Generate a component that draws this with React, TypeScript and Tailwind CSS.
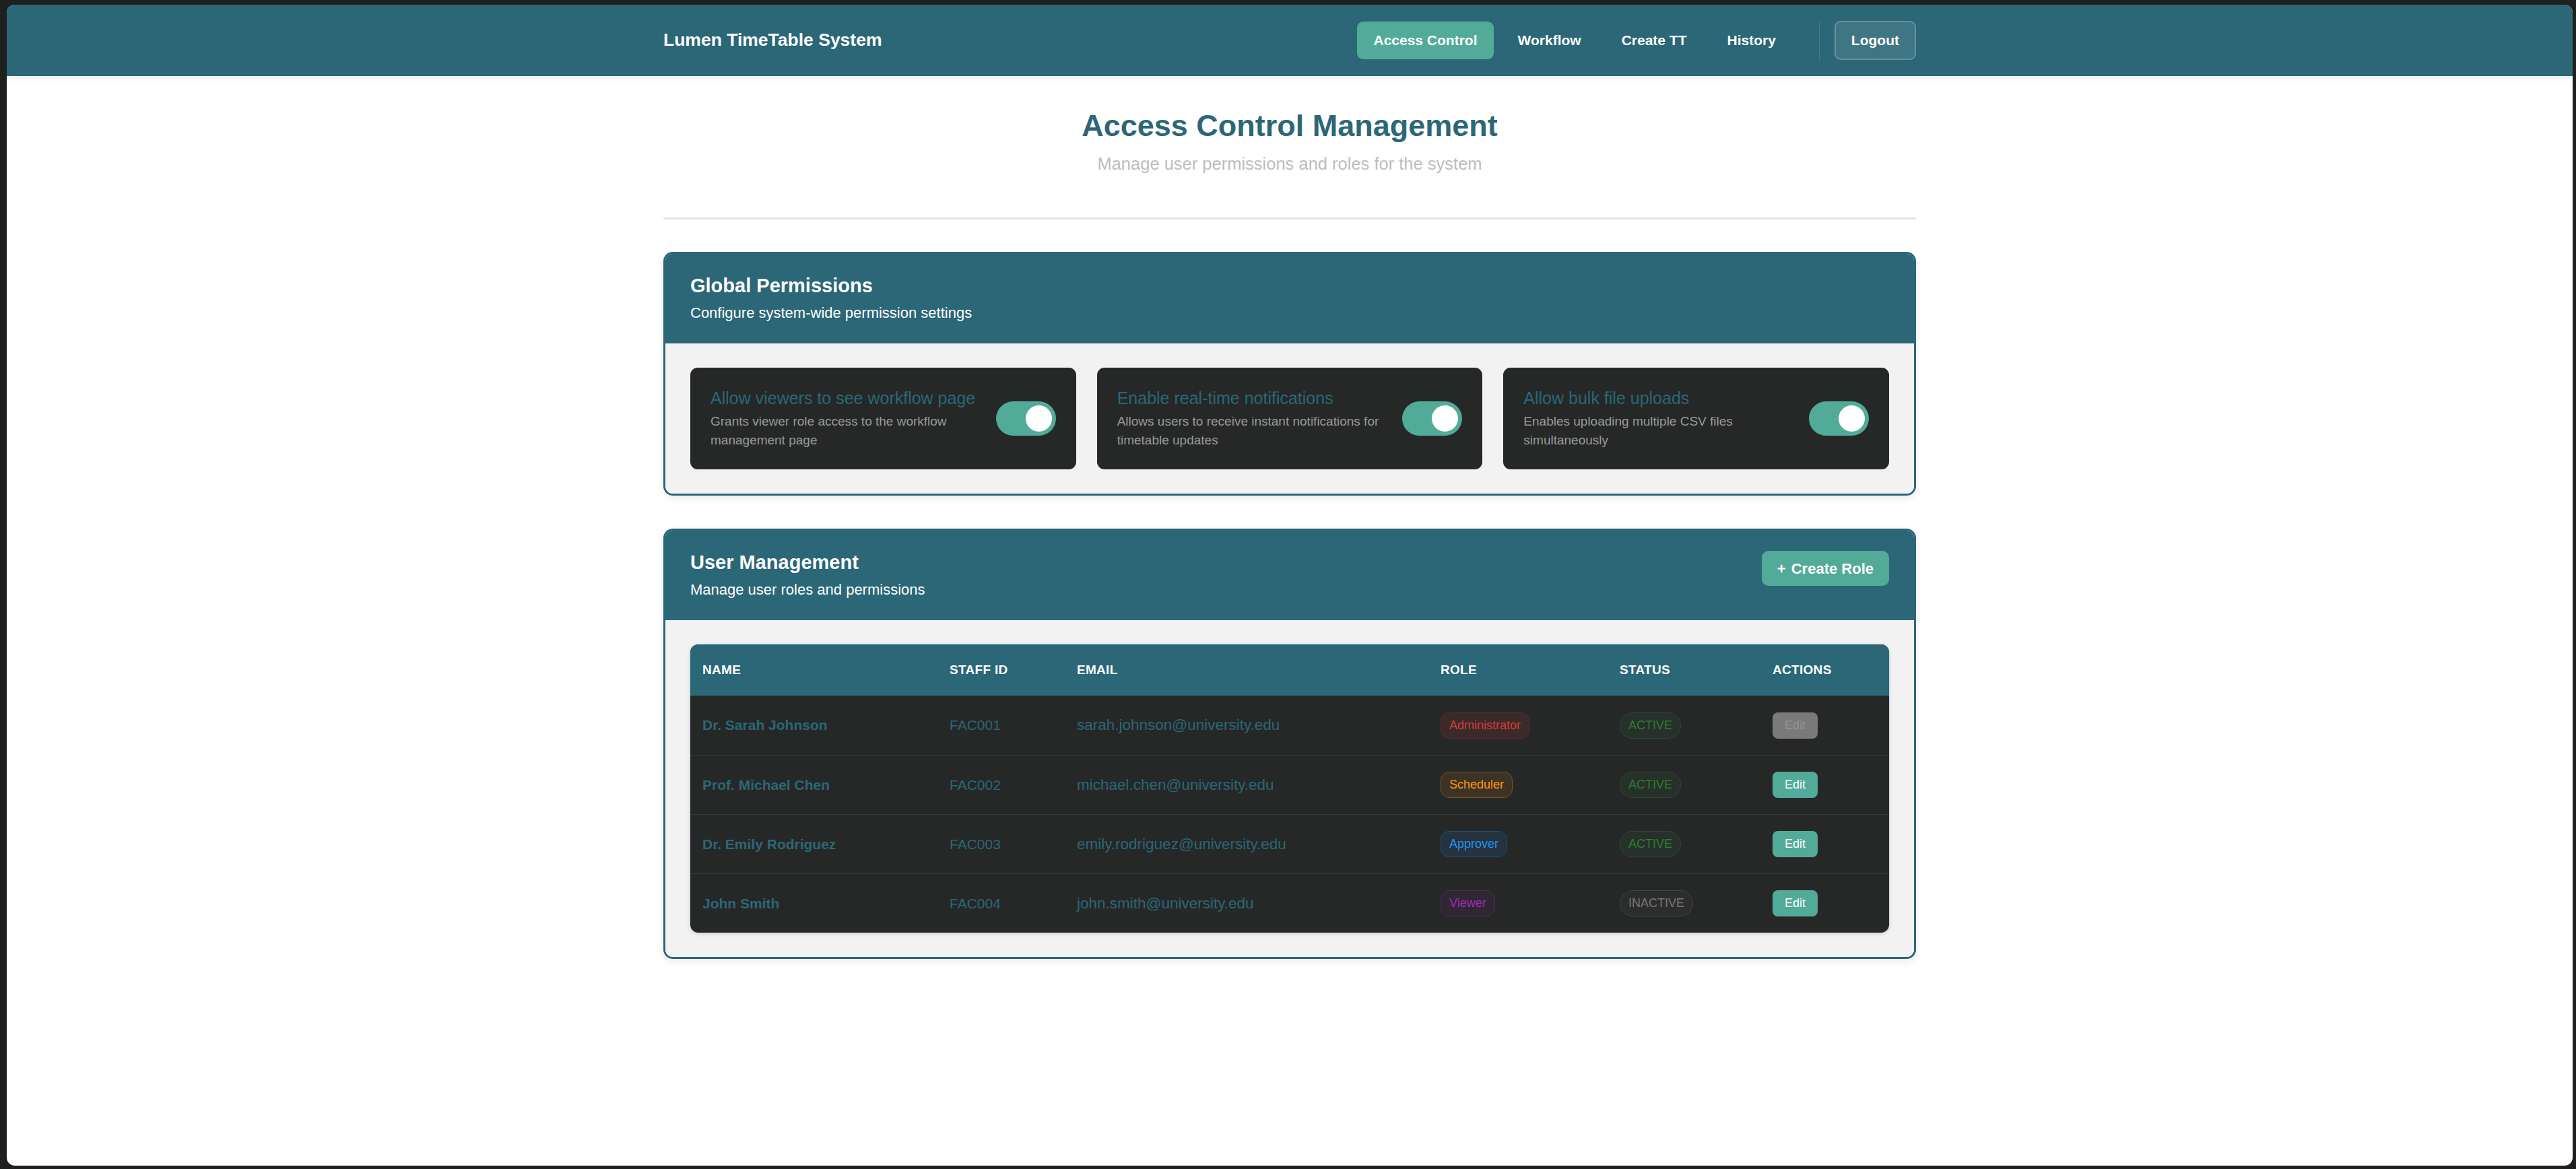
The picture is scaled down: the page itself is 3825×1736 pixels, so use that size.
type Role = "Administrator" | "Scheduler" | "Approver" | "Viewer";

const navItems = ["Access Control", "Workflow", "Create TT", "History"];

const permissions = [
  {
    title: "Allow viewers to see workflow page",
    desc: "Grants viewer role access to the workflow management page",
  },
  {
    title: "Enable real-time notifications",
    desc: "Allows users to receive instant notifications for timetable updates",
  },
  {
    title: "Allow bulk file uploads",
    desc: "Enables uploading multiple CSV files simultaneously",
  },
];

const users: {
  name: string;
  id: string;
  email: string;
  role: Role;
  active: boolean;
  locked?: boolean;
}[] = [
  {
    name: "Dr. Sarah Johnson",
    id: "FAC001",
    email: "sarah.johnson@university.edu",
    role: "Administrator",
    active: true,
    locked: true,
  },
  {
    name: "Prof. Michael Chen",
    id: "FAC002",
    email: "michael.chen@university.edu",
    role: "Scheduler",
    active: true,
  },
  {
    name: "Dr. Emily Rodriguez",
    id: "FAC003",
    email: "emily.rodriguez@university.edu",
    role: "Approver",
    active: true,
  },
  {
    name: "John Smith",
    id: "FAC004",
    email: "john.smith@university.edu",
    role: "Viewer",
    active: false,
  },
];

const roleStyles: Record<Role, string> = {
  Administrator: "text-[#d93a36] bg-[#3a2a2a] border-[#5e2c2c]",
  Scheduler: "text-[#ff9a0a] bg-[#3c3226] border-[#7d5418]",
  Approver: "text-[#2196f3] bg-[#25333f] border-[#1e4f79]",
  Viewer: "text-[#a02cb4] bg-[#302634] border-[#4e2b5b]",
};

const columns = ["Name", "Staff ID", "Email", "Role", "Status", "Actions"];

function Toggle() {
  return (
    <div className="shrink-0 w-[89px] h-[51px] rounded-full bg-[#52ab98] flex items-center justify-end pr-[6px]">
      <div className="w-[39px] h-[39px] rounded-full bg-white" />
    </div>
  );
}

function Card({
  title,
  subtitle,
  action,
  children,
}: {
  title: string;
  subtitle: string;
  action?: React.ReactNode;
  children: React.ReactNode;
}) {
  return (
    <section className="rounded-[14px] border-[3px] border-[#2b6777] overflow-hidden shadow-[0_4px_12px_rgba(0,0,0,0.08)]">
      <div className="bg-[#2b6777] px-[37px] pt-[30px] pb-[30px] flex items-start justify-between">
        <div>
          <h2 className="text-[29px] leading-[35px] font-bold text-white">
            {title}
          </h2>
          <p className="mt-[8px] text-[22px] leading-[30px] text-white">
            {subtitle}
          </p>
        </div>
        {action}
      </div>
      <div className="bg-[#f2f2f2] px-[37px] pt-[36px] pb-[36px]">
        {children}
      </div>
    </section>
  );
}

export default function App() {
  return (
    <div className="h-screen w-full bg-[#1e1f1f] pt-[7px] pl-[10px] pr-[5px] pb-[5px] font-['Liberation_Sans',Arial,sans-serif]">
      <div className="h-full bg-white rounded-[12px] overflow-hidden">
        <header className="relative z-10 h-[106px] bg-[#2b6777] shadow-[0_3px_8px_rgba(0,0,0,0.08)]">
          <div className="max-w-[1860px] h-full mx-auto flex items-center justify-between">
            <div className="text-[26.5px] font-bold text-white">
              Lumen TimeTable System
            </div>
            <div className="flex items-center">
              <nav className="flex items-center gap-[12px]">
                {navItems.map((item, i) => (
                  <a
                    key={item}
                    className={
                      "h-[56px] px-[24px] flex items-center rounded-[9px] text-[21px] font-bold text-white " +
                      (i === 0 ? "bg-[#52ab98]" : "")
                    }
                  >
                    {item}
                  </a>
                ))}
              </nav>
              <div className="w-px h-[58px] bg-white/15 ml-[40px] mr-[22px]" />
              <button className="h-[58px] px-[23px] rounded-[9px] bg-white/10 border-2 border-white/20 text-[21px] font-bold text-white">
                Logout
              </button>
            </div>
          </div>
        </header>

        <main className="max-w-[1860px] mx-auto pt-[47px]">
          <h1 className="text-center text-[45px] leading-[53px] font-bold text-[#2b6777]">
            Access Control Management
          </h1>
          <p className="mt-[13px] text-center text-[25.5px] leading-[34px] text-[#bdbdbd]">
            Manage user permissions and roles for the system
          </p>
          <div className="mt-[63px] h-[3px] bg-[#dde5e9]" />

          <div className="mt-[48px] flex flex-col gap-[49px]">
            <Card
              title="Global Permissions"
              subtitle="Configure system-wide permission settings"
            >
              <div className="grid grid-cols-3 gap-[31px]">
                {permissions.map((p) => (
                  <div
                    key={p.title}
                    className="h-[151px] rounded-[11px] bg-[#262828] px-[30px] flex items-center justify-between gap-[14px]"
                  >
                    <div>
                      <div className="text-[25px] leading-[30px] text-[#2b6777] whitespace-nowrap">
                        {p.title}
                      </div>
                      <div className="mt-[6px] text-[19px] leading-[28px] text-[#9a9a9a]">
                        {p.desc}
                      </div>
                    </div>
                    <Toggle />
                  </div>
                ))}
              </div>
            </Card>

            <Card
              title="User Management"
              subtitle="Manage user roles and permissions"
              action={
                <button className="h-[52px] px-[23px] rounded-[10px] bg-[#52ab98] text-[22px] font-bold text-white flex items-center gap-[8px]">
                  <span>+</span>
                  <span>Create Role</span>
                </button>
              }
            >
              <div className="rounded-[12px] overflow-hidden bg-[#262828] ring-1 ring-[#c8d8e4] shadow-[0_2px_6px_rgba(0,0,0,0.12)]">
                <div className="grid grid-cols-[367px_189px_540px_266px_227px_190px] h-[76px] items-center bg-[#2b6777]">
                  {columns.map((c) => (
                    <div
                      key={c}
                      className="px-[18px] text-[19px] font-bold uppercase tracking-[0.3px] text-white"
                    >
                      {c}
                    </div>
                  ))}
                </div>
                {users.map((u, i) => (
                  <div
                    key={u.id}
                    className={
                      "grid grid-cols-[367px_189px_540px_266px_227px_190px] h-[88px] items-center " +
                      (i > 0 ? "border-t border-[#2d3b3f]" : "")
                    }
                  >
                    <div className="px-[18px] text-[21px] font-bold text-[#2b6777]">
                      {u.name}
                    </div>
                    <div className="px-[18px] text-[21px] text-[#2b6777]">
                      {u.id}
                    </div>
                    <div className="px-[18px] text-[22.5px] text-[#2b6777]">
                      {u.email}
                    </div>
                    <div className="px-[18px]">
                      <span
                        className={
                          "inline-flex items-center h-[39px] px-[12px] rounded-[13px] border text-[18px] " +
                          roleStyles[u.role]
                        }
                      >
                        {u.role}
                      </span>
                    </div>
                    <div className="px-[18px]">
                      {u.active ? (
                        <span className="inline-flex items-center h-[39px] px-[12px] rounded-full border text-[18px] text-[#2e7d32] bg-[#27302a] border-[#2e4a31]">
                          ACTIVE
                        </span>
                      ) : (
                        <span className="inline-flex items-center h-[39px] px-[12px] rounded-full border text-[18px] text-[#777777] bg-[#2c2d2d] border-[#444444]">
                          INACTIVE
                        </span>
                      )}
                    </div>
                    <div className="px-[18px]">
                      <button
                        className={
                          "h-[39px] px-[18px] rounded-[8px] text-[18px] " +
                          (u.locked
                            ? "bg-[#7a7a7a] text-[#959595]"
                            : "bg-[#52ab98] text-white")
                        }
                      >
                        Edit
                      </button>
                    </div>
                  </div>
                ))}
              </div>
            </Card>
          </div>
        </main>
      </div>
    </div>
  );
}
